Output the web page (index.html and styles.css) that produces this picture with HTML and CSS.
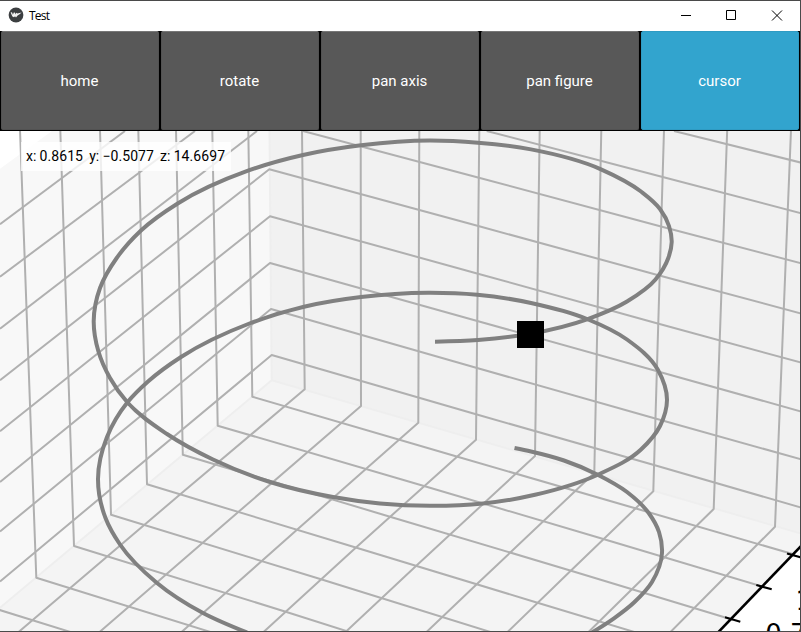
FILE: index.html
```
<!DOCTYPE html>
<html lang="en">
<head>
<meta charset="utf-8">
<title>Test</title>
<link rel="stylesheet" href="styles.css">
</head>
<body>
<div class="window">
  <header class="titlebar">
    <svg class="app-icon" viewBox="0 0 16 16"><circle cx="8" cy="8" r="7.4" fill="#3c3f41"/><path d="M2.600 5.600 4 5.200 4.900 7.800 5.800 5.600 6.800 5.400 7.400 7.400 8 5.800 9.400 6.400 13.600 5.600 11.600 7.200 9.600 8.400 8 10.600 7 9.200 6 10.200 4.400 9.600Z" fill="#f4f4f4"/></svg>
    <span class="title">Test</span>
    <svg class="controls" viewBox="0 0 120 30" fill="none" stroke="#000" stroke-width="1"><path d="M1 14.500h10M46.500 9.500h9v9h-9zM92 9.500l10 10M102 9.500l-10 10"/></svg>
  </header>
  <nav class="toolbar">
    <button>home</button><button>rotate</button><button>pan axis</button><button>pan figure</button><button class="active">cursor</button>
  </nav>
  <main class="figure">
    <svg class="plot" viewBox="0 131 800 500">
      <path class="wall-left" d="M-5 172.500 52 131 269.500 131 271.700 380.300-5 612Z"/>
      <path class="wall-right" d="M269.500 131H801V533.500L271.700 380.300Z"/>
      <path class="floor" d="M271.700 380.300 801 533.500V546.500L718.500 632H-5V612Z"/>
      <path class="pane-edge" d="M269.500 131 271.700 380.300 801 533.500M271.700 380.300-5 612"/>
      <g id="grid" class="grid"></g>
      <g id="curves" class="curve"></g>
      <path class="axis" d="M802 545 718 632.500"/>
      <path class="tick" d="M787 553.500 801 557.500M756.300 585 771.700 589.300M725 617.300 740.300 621.700"/>
      <g class="tick-label"><text x="765.300" y="642.500">0.75</text><text x="795.600" y="609.500">1.00</text></g>
      <rect x="517" y="321" width="27" height="27"/>
    </svg>
    <div class="readout">x: 0.8615&nbsp; y: −0.5077&nbsp; z: 14.6697</div>
  </main>
</div>
<script src="plot.js"></script>
</body>
</html>
```
FILE: styles.css
```
body { margin: 0; background: #444; font-family: Roboto, sans-serif; }
.window { box-sizing: border-box; width: 801px; height: 632px; padding: 1px 1px 1px 0; background: #4a4a4a; overflow: hidden; }
.titlebar { height: 30px; background: #fff; display: flex; align-items: center; }
.app-icon { width: 16px; height: 16px; margin: 0 5px 2px 8px; }
.title { font: 12px/28px "Open Sans", sans-serif; letter-spacing: -0.8px; color: #000; padding-bottom: 1px; }
.controls { width: 120px; height: 30px; margin-left: auto; }
.toolbar { height: 100px; display: grid; grid-template-columns: repeat(5, 1fr); background: #000; }
.toolbar button { margin: 1px; margin-top: 0; border: 1px solid #525252; border-top-color: #777; border-radius: 2px; padding: 0 1px 0 0; background: #585858; color: #fff; font: 15px Roboto, sans-serif; letter-spacing: 0; }
.toolbar .active { background: #32a4ce; border-color: #2f9bc3; }
.figure { height: 500px; background: #fff; position: relative; }
.plot { display: block; width: 800px; height: 500px; }
.readout { position: absolute; left: 21px; top: 11px; width: 205px; height: 29px; padding-left: 5px; background: rgba(255,255,255,.8); font-size: 14px; line-height: 29px; letter-spacing: 0.08px; word-spacing: -0.5px; color: #000; white-space: nowrap; }
.wall-left { fill: #f8f8f8; }
.wall-right { fill: #f1f1f1; }
.floor { fill: #f4f4f4; }
.pane-edge { fill: none; stroke: #eee; stroke-width: 2; }
.grid { fill: none; stroke: #b0b0b0; stroke-width: 2; stroke-linejoin: round; }
.curve { fill: none; stroke: #808080; stroke-width: 4; }
.axis { stroke: #000; stroke-width: 2.600; }
.tick { stroke: #000; stroke-width: 2.200; fill: none; }
.tick-label { font: 26px "DejaVu Sans", sans-serif; }
```
FILE: plot.js
```
const ns = "http://www.w3.org/2000/svg";
function addPath(id, d) {
  const p = document.createElementNS(ns, "path");
  p.setAttribute("d", d);
  document.getElementById(id).appendChild(p);
}

// Grid lines: each entry is a run of x,y pairs across two panes.
const grid = [
  // constant height: left wall, corner, right wall
  "0,224.300 125,131", "674,131 801,162.600", "0,276.700 195,131", "486.700,131 662.700,177 801,213.300",
  "0,328.700 257,131", "303,131 478,177.500 661,226.500 801,263.300",
  "0,380.300 269.300,169.300 478.300,226 659.300,275.500 801,313.500",
  "0,431.300 270,216.300 478,273.700 657.700,323.500 801,362.600",
  "0,482 270,263 477.300,321 659,371.700 801,411.500",
  "0,531.500 271,309 477,368 655.300,418.500 801,459.300",
  "0,581.500 271.700,355 476,414.300 654,465 801,507.600",
  // left wall verticals running onto the floor
  "248.300,130 252.300,396.700 456.700,456.500 636,508.500 794.300,554.500",
  "212.300,130 217.700,425.700 424,486 603.300,539 764,587",
  "176,130 182.800,454.800 390,516.700 571,570.700 732.700,619.700",
  "138.300,130 147,484.300 355.700,547.500 535,602 636,632.500",
  "100,130 111,514.700 321,579.300 492,632.500",
  "60.300,130 74,546 285.700,611.700 351,632.500",
  "20,130 36.300,577.700 212,632.500", "-2,609.500 72,632.500",
  // right wall verticals running onto the floor
  "302,130 304.700,389.300 180,494.500 18,632.500",
  "360.700,130 361,406 238.300,512 99,632.500",
  "419.300,130 418.300,422.700 296.700,530 181,632.500",
  "479.300,130 476,439.700 355.700,547.700 263,632.500",
  "539.700,130 535,456 416,566 345,632.500",
  "601.300,130 594.300,473 476.700,584.300 426,632.500",
  "664,130 653.300,491.300 571,570.500 507,632.500",
  "727.200,130 713.700,509 632.700,588.500 588,632.500",
  "791,130 775,526.700 670,632.500"
];
grid.forEach(r => addPath("grid", "M" + r));

// Smooth curve through sampled points of the helix (chord-length spline).
function spline(text) {
  const p = text.trim().split(/\s+/).map(s => s.split(",").map(Number));
  const h = p.slice(1).map((q, i) => Math.hypot(q[0] - p[i][0], q[1] - p[i][1]));
  const slope = (i, k) => (p[i + 1][k] - p[i][k]) / h[i];
  const last = p.length - 1;
  const tan = (i, k) => {
    if (i === 0) return 1.5 * slope(0, k) - 0.5 * tan(1, k);
    if (i === last) return 1.5 * slope(last - 1, k) - 0.5 * tan(last - 1, k);
    return (slope(i - 1, k) * h[i] + slope(i, k) * h[i - 1]) / (h[i - 1] + h[i]);
  };
  const unit = i => {
    const x = tan(i, 0), y = tan(i, 1), n = Math.hypot(x, y);
    return [x / n, y / n];
  };
  let d = "M" + p[0];
  for (let i = 0; i < last; i++) {
    const a = unit(i), b = unit(i + 1), c = p[i], e = p[i + 1];
    const s = h[i] * 2 / 3 / (1 + Math.sqrt((1 + a[0] * b[0] + a[1] * b[1]) / 2));
    d += `C${c[0] + a[0] * s},${c[1] + a[1] * s} ${e[0] - b[0] * s},${e[1] - b[1] * s} ${e}`;
  }
  addPath("curves", d);
}
spline(`435,341.700 478,340 530,333.800 587,319.300 627,301.500 655.500,279.500 668.300,258 671.700,242 669,226
  660,209 641,191.500 601,169.300 531,149.400 478,142.700 430,140.500 361,145.300 303,155 248,170.700 177.700,203.500
  141,230.500 116.700,258 100,288 93.700,321 98.300,351 110,378 127.300,402.300 167,434 213,459.500 270,482 333,497
  380,503.500 430,505.800 483,503.500 535,494.800 597.700,474.700 641,449.500 660,426 667,400 658,370 627,339.500
  587,319 531,303 477.300,294.700 428,292.700 361,297 304,306.700 250.700,323 181,357 148,381.500
  127.300,402.500 107,437 98,479 105.500,518 120,544.500 156.700,582.700 203,613 247,632.500`);
spline("514.500,448 531,451.500 564,460.500 597.700,474.700 627,492 648.700,513 659,532 662,553 652,582 634,602.500 614,618.300 592,632.500");
```
